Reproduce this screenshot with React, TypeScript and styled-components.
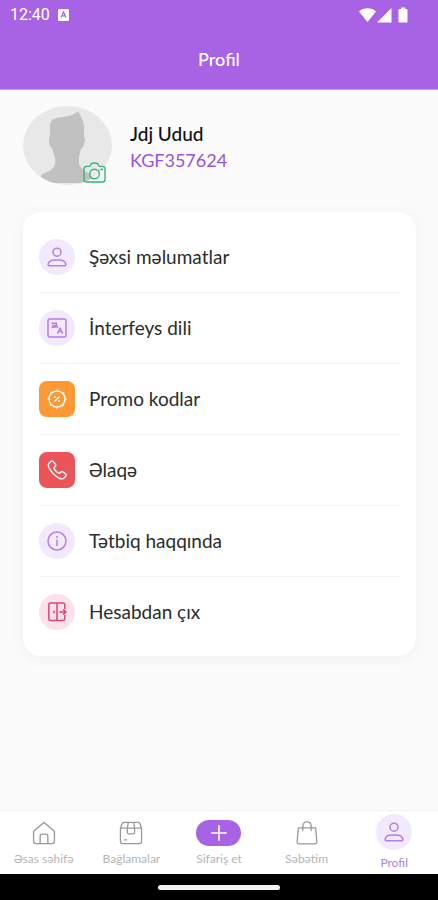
import React from "react";
import styled, { createGlobalStyle } from "styled-components";

const purple = "#a763e3";

const GlobalStyle = createGlobalStyle`
  *, *::before, *::after { box-sizing: border-box; }
  body {
    margin: 0;
    background: #fbfbfb;
    font-family: Lato, "Noto Sans", sans-serif;
    color: #2c2c2c;
  }
  button { font: inherit; color: inherit; border: 0; background: none; padding: 0; cursor: pointer; }
  svg { display: block; flex: none; }
`;

const Screen = styled.div`
  min-height: 100vh;
  display: flex;
  flex-direction: column;
`;

const Header = styled.header`
  background: ${purple};
  color: #fff;
  height: 90px;
  border-bottom: 1px solid #c79aee;
`;

const StatusBar = styled.div`
  height: 29px;
  display: flex;
  align-items: center;
  gap: 8px;
  padding: 0 30px 0 10px;
`;

const Clock = styled.time`
  font: 400 16px/20px Roboto, sans-serif;
`;

const StatusIcons = styled.div`
  margin-left: auto;
  display: flex;
`;

const Title = styled.h1`
  margin: 0;
  font-size: 18px;
  line-height: 60px;
  font-weight: 500;
  text-align: center;
`;

const Main = styled.main`
  flex: 1;
  padding: 16px 22px 24px 23px;
`;

const Profile = styled.section`
  display: flex;
  align-items: center;
  gap: 18px;
  margin-bottom: 27px;
`;

const AvatarBox = styled.div`
  position: relative;
  width: 89px;
  height: 79px;
`;

const CameraButton = styled.button`
  position: absolute;
  right: 6px;
  bottom: 2px;
`;

const Identity = styled.div`
  padding-top: 2px;
`;

const Name = styled.h2`
  margin: 0;
  font-size: 19px;
  line-height: 27px;
  font-weight: 500;
  color: #111;
`;

const Code = styled.p`
  margin: 0;
  font-size: 18px;
  line-height: 27px;
  color: #9b51e0;
`;

const Card = styled.nav`
  background: #fff;
  border-radius: 18px;
  box-shadow: 0 2px 16px rgba(0, 0, 0, 0.05);
  padding: 10px 15px 8px 16px;
`;

const Row = styled.button`
  display: flex;
  align-items: center;
  gap: 14px;
  width: 100%;
  height: 71px;
  text-align: left;
  font-size: 19px;
  line-height: 24px;
  border-bottom: 1px solid #f3f3f3;
  &:last-child { border-bottom-color: transparent; }
`;

const Badge = styled.span<{ $bg: string; $fg: string; $square?: boolean }>`
  display: flex;
  align-items: center;
  justify-content: center;
  width: 36px;
  height: 36px;
  flex: none;
  border-radius: ${(p) => (p.$square ? "8px" : "50%")};
  background: ${(p) => p.$bg};
  color: ${(p) => p.$fg};
`;

const TabBar = styled.nav`
  display: grid;
  grid-template-columns: repeat(5, 1fr);
  background: #fff;
  border-top: 1px solid #f3f3f3;
  height: 64px;
`;

const Tab = styled.a<{ $active?: boolean }>`
  display: flex;
  flex-direction: column;
  align-items: center;
  padding-top: ${(p) => (p.$active ? "3px" : "9px")};
  gap: 6px;
  font-size: 12px;
  line-height: 14px;
  white-space: nowrap;
  text-decoration: none;
  color: ${(p) => (p.$active ? "#b57eea" : "#b4b4b4")};
`;

const TabIcon = styled.span`
  display: flex;
  align-items: center;
  height: 26px;
  color: #999;
`;

const Plus = styled.span`
  display: flex;
  align-items: center;
  justify-content: center;
  width: 45px;
  height: 26px;
  border-radius: 13px;
  background: ${purple};
  color: #fff;
`;

const SystemBar = styled.footer`
  display: flex;
  justify-content: center;
  align-items: center;
  height: 26px;
  background: #000;
`;

const HomeHandle = styled.span`
  width: 122px;
  height: 5px;
  border-radius: 3px;
  background: #f4f0f4;
`;

type IconProps = { size?: number; width?: number; children: React.ReactNode };
const Icon = ({ size = 20, width = 1.3, children }: IconProps) => (
  <svg width={size} height={size} viewBox="0 0 20 20" fill="none" stroke="currentColor"
    strokeWidth={width} strokeLinecap="round" strokeLinejoin="round" aria-hidden="true">
    {children}
  </svg>
);

const PersonIcon = () => (
  <Icon width={1.5}>
    <circle cx="10" cy="5.200" r="4" />
    <path d="M2.800 18.800c-1.300 0-1.900-.8-1.600-2C1.900 14.300 4.500 12.900 7.800 12.900h4.400c3.300 0 5.900 1.400 6.600 3.900.3 1.200-.3 2-1.600 2z" />
  </Icon>
);

const LanguageIcon = () => (
  <Icon width={1.5}>
    <rect x="1" y="1" width="18" height="18" rx="2" />
    <path d="M5 5.300h4.500v2c0 1.400-1.500 2.200-4.300 2.200M5.300 7.400h4.200l1 2.100" />
    <path d="m10.800 15.200 2.300-5.200 2.400 5.200M11.800 13.600h2.800" />
  </Icon>
);

const PromoIcon = () => (
  <Icon width={1.5}>
    <circle cx="10" cy="10" r="8" />
    <circle cx="10" cy="10" r="9" strokeWidth="1.200" strokeDasharray=".6 6.469" />
    <path d="m8 12 4-4" />
    <path d="M8 8h.1M12 12h.1" strokeWidth="1.800" />
  </Icon>
);

const PhoneIcon = () => (
  <Icon width={1.4}>
    <path d="M2.500 2.800 3.800 1.500c.8-.7 1.800-.7 2.500.1l2 2.600c.6.8.5 1.700-.2 2.400l-.8.8c-.5.5-.5 1-.1 1.600 1.100 1.600 2.400 2.900 4 4 .6.400 1.100.4 1.600-.1l.8-.8c.7-.7 1.600-.8 2.400-.2l2.500 2c.8.700.8 1.700.1 2.500l-1.300 1.300c-1.200 1.200-3.100 1.400-4.700.6C8 16 4 12 1.900 7.500 1.100 5.900 1.300 4 2.500 2.800Z" />
  </Icon>
);

const InfoIcon = () => (
  <Icon width={1.5}>
    <circle cx="10" cy="10" r="9" />
    <path d="M10 9v5.500" />
    <path d="M10 5.800v.2" strokeWidth="1.800" />
  </Icon>
);

const ExitIcon = () => (
  <Icon width={1.5}>
    <path d="M17.800 6.500V3c0-1.200-.8-2-2-2H3.800c-1.200 0-2 .8-2 2v13.500c0 1.200.8 2 2 2h3.700c1.500 0 2.500-.8 2.500-2.300V1M10 18.500h5.800c1.200 0 2-.8 2-2V13.500M12.800 10H19M16.500 7.800 19 10l-2.500 2.200M7 9.200v1.600" />
  </Icon>
);

const Avatar = () => (
  <svg width="89" height="79" viewBox="0 0 89 79" role="img" aria-label="Jdj Udud">
    <defs>
      <clipPath id="avatar-oval"><ellipse cx="44.500" cy="39.500" rx="44.500" ry="39.500" /></clipPath>
    </defs>
    <g clipPath="url(#avatar-oval)">
      <rect width="89" height="79" fill="#e8e8e8" />
      <path fill="#c1c1c1" d="M27 31V20c0-3 1-6 4-7 5-2 10-2 15-3 4-1 7-3 9-5l4 8c2 4 2 7 2 11v7c2 1 1 4 0 7 0 2-1 4-3 5l-2 8v7c2 5 6 7 11 10l4 9H16l3-9c7-2 12-5 13-10 1-4 0-6-1-9l-2-7c-2-1-3-4-3-7 0-2 0-4 1-4Z" />
    </g>
  </svg>
);

const menu = [
  { label: "Şəxsi məlumatlar", icon: <PersonIcon />, bg: "#f2e9fc", fg: "#b57eea" },
  { label: "İnterfeys dili", icon: <LanguageIcon />, bg: "#f2e9fc", fg: "#b57eea" },
  { label: "Promo kodlar", icon: <PromoIcon />, bg: "#fd9833", fg: "#fff", square: true },
  { label: "Əlaqə", icon: <PhoneIcon />, bg: "#ec5558", fg: "#fff", square: true },
  { label: "Tətbiq haqqında", icon: <InfoIcon />, bg: "#f2e9fc", fg: "#b57eea" },
  { label: "Hesabdan çıx", icon: <ExitIcon />, bg: "#fae1ea", fg: "#dc4770" },
];

export default function App() {
  return (
    <Screen>
      <GlobalStyle />
      <Header>
        <StatusBar>
          <Clock>12:40</Clock>
          <svg width="11" height="12" viewBox="0 0 11 12" aria-hidden="true">
            <rect width="11" height="12" rx="1" fill="#fff" />
            <path d="m3 8.500 2.500-5.500L8 8.500M4 6.800h3" fill="none" stroke={purple} strokeWidth="1.200" />
          </svg>
          <StatusIcons>
            <svg width="49" height="16" viewBox="0 0 49 16" fill="#fff" aria-hidden="true">
              <path d="M0 4.500C4.500.3 12.500.3 17 4.500L8.500 15ZM18 15.500 32.500 1v14.500ZM40 2h2V.5h4V2h1.500c.6 0 1 .4 1 1v11.500c0 .6-.4 1-1 1h-7c-.6 0-1-.4-1-1V3c0-.6.4-1 .5-1Z" />
            </svg>
          </StatusIcons>
        </StatusBar>
        <Title>Profil</Title>
      </Header>

      <Main>
        <Profile>
          <AvatarBox>
            <Avatar />
            <CameraButton aria-label="Şəkli dəyiş">
              <svg width="23" height="21" viewBox="0 0 23 21" fill="none" stroke="#35b57c" strokeWidth="1.400" strokeLinejoin="round">
                <path d="M1 7c0-1.800.8-2.600 2.600-2.600H6c.8 0 1.200-.4 1.500-1.200C7.900 1.600 8.600 1 10 1h3c1.400 0 2.100.6 2.500 2.200.3.800.7 1.200 1.500 1.200h2.400C21.200 4.400 22 5.200 22 7v10.400c0 1.800-.8 2.600-2.600 2.600H3.600C1.800 20 1 19.200 1 17.400Z" />
                <circle cx="11.500" cy="12" r="4.800" />
                <path d="M18 7.500h1.500" strokeLinecap="round" />
              </svg>
            </CameraButton>
          </AvatarBox>
          <Identity>
            <Name>Jdj Udud</Name>
            <Code>KGF357624</Code>
          </Identity>
        </Profile>

        <Card aria-label="Profil">
          {menu.map((m) => (
            <Row key={m.label}>
              <Badge $bg={m.bg} $fg={m.fg} $square={m.square}>{m.icon}</Badge>
              {m.label}
            </Row>
          ))}
        </Card>
      </Main>

      <TabBar>
        <Tab href="#home">
          <TabIcon>
            <Icon size={24} width={1.1}>
              <path d="M1.300 8.500 10 1.200l8.700 7.300v8.300c0 1.300-.7 2-2 2H3.300c-1.300 0-2-.7-2-2ZM6.800 18.800v-6.300c0-1 .5-1.500 1.500-1.500h3.400c1 0 1.500.5 1.500 1.500v6.300" />
            </Icon>
          </TabIcon>
          Əsas səhifə
        </Tab>
        <Tab href="#packages">
          <TabIcon>
            <Icon size={24} width={1.1}>
              <path d="M1.200 6v10.800c0 1.300.7 2 2 2h13.600c1.300 0 2-.7 2-2V6L17.300 2c-.3-.6-.8-.9-1.500-.9H4.200c-.7 0-1.200.3-1.500.9ZM1.200 6h17.600M7.800 1.100 7 6v3.500c0 .8.400 1.200 1.200 1.200h3.600c.8 0 1.200-.4 1.200-1.200V6l-.8-4.900M4.500 15.800h1.800" />
            </Icon>
          </TabIcon>
          Bağlamalar
        </Tab>
        <Tab href="#order">
          <Plus>
            <Icon size={18} width={1.8}><path d="M10 2v16M2 10h16" /></Icon>
          </Plus>
          Sifariş et
        </Tab>
        <Tab href="#cart">
          <TabIcon>
            <Icon size={24} width={1.1}>
              <path d="M2.800 5.800h14.400l1 11.300c.1 1.300-.5 1.900-1.800 1.900H3.600c-1.300 0-1.900-.6-1.800-1.900ZM6.500 8V4.500c0-2.200 1.300-3.700 3.500-3.700s3.500 1.500 3.500 3.700V8" />
            </Icon>
          </TabIcon>
          Səbətim
        </Tab>
        <Tab href="#profile" $active aria-current="page">
          <Badge $bg="#f2e9fc" $fg="#b57eea"><PersonIcon /></Badge>
          Profil
        </Tab>
      </TabBar>
      <SystemBar><HomeHandle /></SystemBar>
    </Screen>
  );
}
